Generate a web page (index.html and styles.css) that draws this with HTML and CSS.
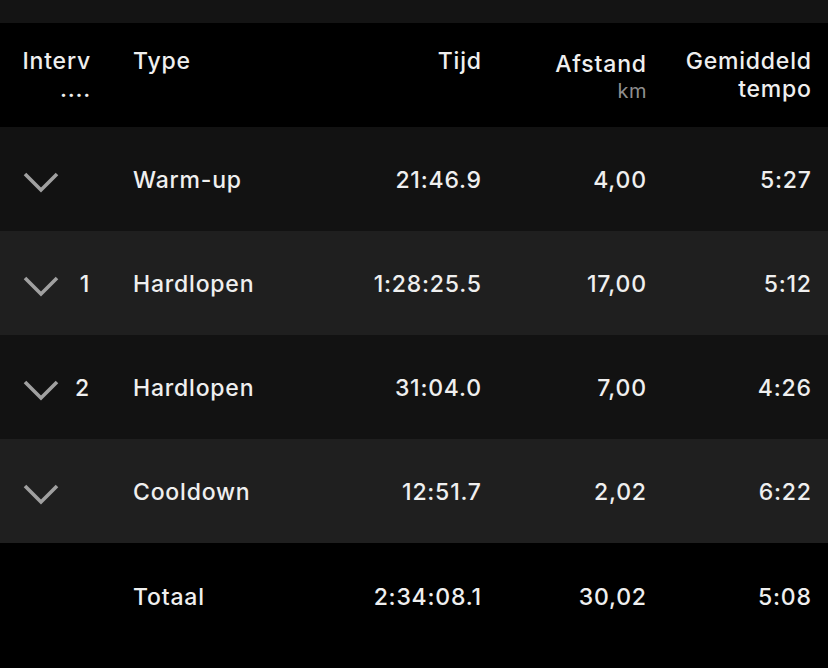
FILE: index.html
```html
<!DOCTYPE html>
<html lang="nl">
<head>
<meta charset="utf-8">
<link rel="stylesheet" href="styles.css">
</head>
<body>
<div class="topbar"></div>
<div class="table">
  <div class="row head">
    <div class="c-int"><span class="line">Interv</span><span class="line">....</span></div>
    <div class="c-type">Type</div>
    <div class="c-num">Tijd</div>
    <div class="c-num afstand"><span class="line">Afstand</span><span class="unit">km</span></div>
    <div class="c-num"><span class="line">Gemiddeld</span><span class="line">tempo</span></div>
  </div>
  <div class="row dark">
    <div class="c-int"><svg class="chev" viewBox="0 0 36 22"><polyline points="2,3 18,19 34,3"/></svg><span class="n"></span></div>
    <div class="c-type">Warm-up</div>
    <div class="c-num">21:46.9</div>
    <div class="c-num">4,00</div>
    <div class="c-num">5:27</div>
  </div>
  <div class="row light">
    <div class="c-int"><svg class="chev" viewBox="0 0 36 22"><polyline points="2,3 18,19 34,3"/></svg><span class="n">1</span></div>
    <div class="c-type">Hardlopen</div>
    <div class="c-num">1:28:25.5</div>
    <div class="c-num">17,00</div>
    <div class="c-num">5:12</div>
  </div>
  <div class="row dark">
    <div class="c-int"><svg class="chev" viewBox="0 0 36 22"><polyline points="2,3 18,19 34,3"/></svg><span class="n">2</span></div>
    <div class="c-type">Hardlopen</div>
    <div class="c-num">31:04.0</div>
    <div class="c-num">7,00</div>
    <div class="c-num">4:26</div>
  </div>
  <div class="row light">
    <div class="c-int"><svg class="chev" viewBox="0 0 36 22"><polyline points="2,3 18,19 34,3"/></svg><span class="n"></span></div>
    <div class="c-type">Cooldown</div>
    <div class="c-num">12:51.7</div>
    <div class="c-num">2,02</div>
    <div class="c-num">6:22</div>
  </div>
  <div class="row total">
    <div class="c-int"></div>
    <div class="c-type">Totaal</div>
    <div class="c-num">2:34:08.1</div>
    <div class="c-num">30,02</div>
    <div class="c-num">5:08</div>
  </div>
</div>
</body>
</html>
```
FILE: styles.css
```css
html, body {
  margin: 0;
  padding: 0;
  background: #000;
}
body {
  width: 828px;
  height: 668px;
  overflow: hidden;
  font-family: Inter, "Liberation Sans", sans-serif;
  font-weight: 500;
  font-size: 23px;
  letter-spacing: 0.8px;
  color: #efefef;
}
.topbar {
  height: 23px;
  background: #141414;
}
.row {
  display: grid;
  grid-template-columns: 69px 42px 198px 150px 165px 165px;
  padding: 2px 17px 0 22px;
  box-sizing: border-box;
  height: 104px;
  align-items: center;
}
.row > .c-int { grid-column: 1; }
.row > .c-type { grid-column: 3; }
.c-int {
  display: flex;
  align-items: center;
  justify-content: space-between;
}
.c-num { text-align: right; margin-right: -0.8px; }
.line { display: block; }
.head {
  align-items: start;
  padding-top: 24px;
  line-height: 28px;
}
.head .c-int {
  display: block;
  text-align: right;
}
.head .afstand { padding-top: 3px; }
.unit {
  display: block;
  font-size: 20px;
  font-weight: 400;
  letter-spacing: 0.4px;
  color: #8f8f8f;
  line-height: 26px;
}
.dark { background: #121212; }
.light { background: #1f1f1f; }
.total { height: 125px; padding-bottom: 20px; }
.chev {
  width: 36px;
  height: 22px;
  margin-left: 1px;
  margin-top: 3px;
  fill: none;
  stroke: #a0a0a0;
  stroke-width: 3.6;
  stroke-linecap: butt;
  stroke-linejoin: miter;
}
.n { padding-right: 1px; }
```
